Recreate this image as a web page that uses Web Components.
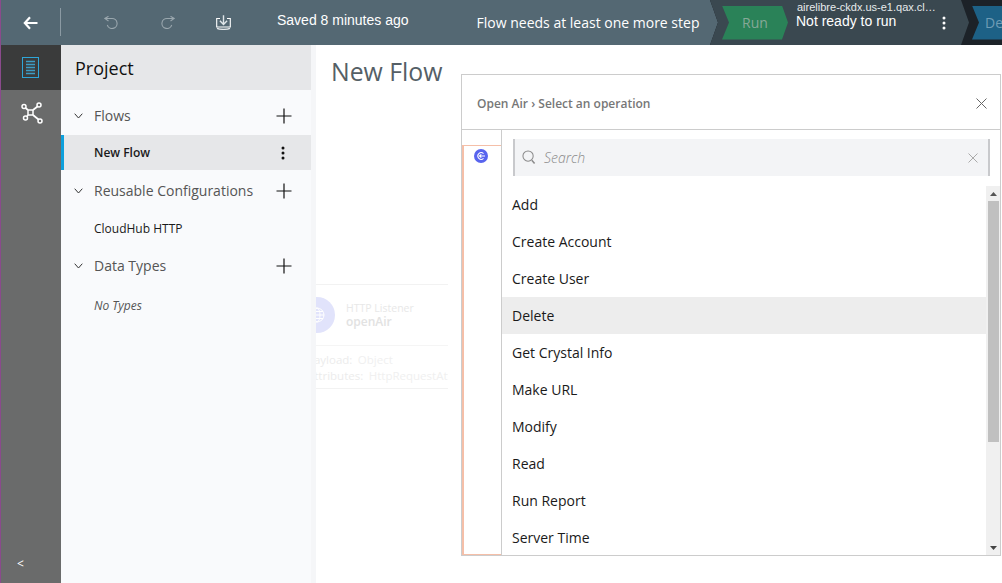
<!DOCTYPE html>
<html lang="en">
<head>
<meta charset="utf-8">
<title>New Flow</title>
<style>
  html, body { margin: 0; height: 100%; overflow: hidden; background: #fff; }
  body { font-family: "Open Sans", sans-serif; }
</style>
</head>
<body>
<app-shell>
  <top-bar slot="top"></top-bar>
  <side-rail slot="rail"></side-rail>
  <project-panel slot="panel">
    <panel-section title="Flows">
      <panel-item selected menu>New Flow</panel-item>
    </panel-section>
    <panel-section title="Reusable Configurations">
      <panel-item>CloudHub HTTP</panel-item>
    </panel-section>
    <panel-section title="Data Types">
      <panel-item empty>No Types</panel-item>
    </panel-section>
  </project-panel>
  <flow-canvas slot="main">
    <operation-modal slot="overlay" crumb="Open Air › Select an operation">
      <op-item>Add</op-item>
      <op-item>Create Account</op-item>
      <op-item>Create User</op-item>
      <op-item active>Delete</op-item>
      <op-item>Get Crystal Info</op-item>
      <op-item>Make URL</op-item>
      <op-item>Modify</op-item>
      <op-item>Read</op-item>
      <op-item>Run Report</op-item>
      <op-item>Server Time</op-item>
    </operation-modal>
  </flow-canvas>
</app-shell>

<script>
// app frame: purple edge, top bar, then rail + panel + canvas
class AppShell extends HTMLElement {
    constructor() {
        super();
        this.attachShadow({ mode: 'open' });
        this.shadowRoot.innerHTML = `
        <style>
          :host { display: flex; flex-direction: column; height: 583px; width: 1002px; border-left: 1px solid #8a4a8c; box-sizing: border-box; }
          .body { flex: 1; display: flex; min-height: 0; }
        </style>
        <slot name="top"></slot>
        <div class="body">
          <slot name="rail"></slot>
          <slot name="panel"></slot>
          <slot name="main"></slot>
        </div>`;
    }
}

class TopBar extends HTMLElement {
    constructor() {
        super();
        this.attachShadow({ mode: 'open' });
        this.shadowRoot.innerHTML = `
        <style>
          :host { display: flex; height: 45px; background: #1c2228; color: #fff; flex: none; align-items: stretch; position: relative; overflow: hidden; font-family: "Liberation Sans", sans-serif; font-size: 14px; }
          .main { width: 717px; flex: none; display: flex; align-items: center; background: #546873; clip-path: polygon(0 0, 709px 0, 717px 50%, 709px 100%, 0 100%); }
          .back { width: 59px; flex: none; display: flex; justify-content: center; }
          .sep { width: 1px; height: 28px; background: #8b9aa3; flex: none; margin-top: -1px; }
          .tool { flex: none; display: flex; }
          .undo { margin-left: 43px; }
          .redo { margin-left: 43px; }
          .save { margin-left: 41px; }
          .saved { margin-left: 46px; position: relative; top: -3px; white-space: nowrap; }
          .need { margin-left: 68px; font-family: "Open Sans", sans-serif; white-space: nowrap; }
          .run-seg { width: 259px; flex: none; margin-left: -8px; background: #3a4850; display: flex; align-items: center; clip-path: polygon(0 0, 251px 0, 259px 50%, 251px 100%, 0 100%, 8px 50%); position: relative; }
          .run { margin-left: 12px; width: 66px; height: 34px; background: #2a8258; color: #86a897; font-family: "Open Sans", sans-serif; display: flex; align-items: center; justify-content: center; clip-path: polygon(0 0, 60px 0, 66px 50%, 60px 100%, 0 100%, 7px 50%); flex: none; box-sizing: border-box; }
          .target { margin-left: 8px; display: flex; flex-direction: column; width: 142px; flex: none; margin-top: -16px; }
          .host { font-size: 11px; line-height: 13px; white-space: nowrap; overflow: hidden; color: #e6eaec; padding-left: 1px; }
          .state { line-height: 16px; white-space: nowrap; margin-top: -1px; }
          .more { flex: none; margin-left: 4px; display: flex; }
          .deploy { margin-left: 3px; width: 40px; flex: none; height: 34px; align-self: center; background: #1d6186; color: #6f9cb5; font-family: "Open Sans", sans-serif; display: flex; align-items: center; padding-left: 13px; box-sizing: border-box; clip-path: polygon(0 0, 100% 0, 100% 100%, 0 100%, 7px 50%); white-space: nowrap; overflow: hidden; }
        </style>
        <div class="main">
          <div class="back">
            <svg width="16" height="14" viewBox="0 0 16 14"><path d="M7 1.2 1.800 7 7 12.800M2 7h12.500" fill="none" stroke="#fff" stroke-width="2.2"/></svg>
          </div>
          <div class="sep"></div>
          <div class="tool undo">
            <svg width="14" height="13" viewBox="0 0 14 13" fill="none" stroke="#9aa7ae" stroke-width="1.100"><path d="M4.500.3.800 2.500 4.500 5M1 2.500h7a5 5 0 1 1-4.700 6.500"/></svg>
          </div>
          <div class="tool redo">
            <svg width="14" height="13" viewBox="0 0 14 13" fill="none" stroke="#9aa7ae" stroke-width="1.100"><path d="M9.500.3 13.200 2.500 9.500 5M13 2.500H6a5 5 0 1 0 4.700 6.500"/></svg>
          </div>
          <div class="tool save">
            <svg width="15" height="15" viewBox="0 0 15 15" fill="none" stroke="#fff" stroke-width="1.100"><path d="M4 3.500H.7V12h13.600V3.500H11"/><path d="M7.500.3V9M3.900 5.700 7.500 9.500l3.600-3.800" stroke="#dfe5e8" stroke-width="1.400"/><path d="M1 13.400c3 1.300 10 1.300 13 0" stroke="#e4e8ea" stroke-width="1.300"/></svg>
          </div>
          <div class="saved">Saved 8 minutes ago</div>
          <div class="need">Flow needs at least one more step</div>
        </div>
        <div class="run-seg">
          <div class="run">Run</div>
          <div class="target">
            <div class="host">airelibre-ckdx.us-e1.qax.cl…</div>
            <div class="state">Not ready to run</div>
          </div>
          <div class="more">
            <svg width="4" height="14" viewBox="0 0 4 14" fill="#fff"><circle cx="2" cy="2" r="1.500"/><circle cx="2" cy="7" r="1.500"/><circle cx="2" cy="12" r="1.500"/></svg>
          </div>
        </div>
        <div class="deploy">Deploy</div>`;
    }
}

class SideRail extends HTMLElement {
    constructor() {
        super();
        this.attachShadow({ mode: 'open' });
        this.shadowRoot.innerHTML = `
        <style>
          :host { display: flex; flex-direction: column; width: 60px; flex: none; background: #6a6b6b; color: #fff; font-family: "Open Sans", sans-serif; }
          .tab { height: 45px; display: flex; align-items: center; justify-content: center; flex: none; }
          .tab.on { background: #3a3b3b; }
          .tab.off { padding-left: 1px; box-sizing: border-box; }
          .grow { flex: 1; }
          .collapse { height: 41px; font-size: 12px; padding-left: 16px; line-height: 44px; box-sizing: border-box; }
        </style>
        <div class="tab on">
          <svg width="18" height="21" viewBox="0 0 18 21" fill="none" stroke="#2ea6d8"><rect x=".5" y=".5" width="16" height="20" stroke-width="1"/><path d="M4 4.500h9M4 7.500h9M4 10.500h9M4 13.500h9M4 16.500h9" stroke-width="1.300" stroke="#3d9cc4"/></svg>
        </div>
        <div class="tab off">
          <svg width="22" height="22" viewBox="0 0 22 22" fill="none" stroke="#fff" stroke-width="1.500"><circle cx="3" cy="4.500" r="2"/><circle cx="18" cy="3" r="2"/><circle cx="4.500" cy="16" r="2"/><circle cx="19" cy="19" r="2"/><rect x="7" y="8" width="5" height="5"/><path d="M4.500 6 7 8M16.500 4.500 12 8M6 14.500 7 13M17.500 17.500 12 13" stroke-width="1.700"/></svg>
        </div>
        <div class="grow"></div>
        <div class="collapse">&lt;</div>`;
    }
}

class ProjectPanel extends HTMLElement {
    constructor() {
        super();
        this.attachShadow({ mode: 'open' });
        this.shadowRoot.innerHTML = `
        <style>
          :host { display: flex; flex-direction: column; width: 250px; flex: none; background: #f9fafc; font-family: "Open Sans", sans-serif; }
          .title { height: 45px; flex: none; background: #e6e7e9; color: #111; font-size: 18px; display: flex; align-items: center; padding-left: 14px; margin-bottom: 5px; }
        </style>
        <div class="title">Project</div>
        <slot></slot>`;
    }
}

class PanelSection extends HTMLElement {
    constructor() {
        super();
        this.attachShadow({ mode: 'open' });
        this.shadowRoot.innerHTML = `
        <style>
          :host { display: block; margin-top: 1px; }
          .head { height: 39px; display: flex; align-items: center; color: #555; font-size: 14px; }
          .chev { width: 33px; padding-left: 13px; box-sizing: border-box; flex: none; display: flex; }
          .name { flex: 1; }
          .add { flex: none; margin-right: 19px; display: flex; }
        </style>
        <div class="head">
          <span class="chev"><svg width="9" height="6" viewBox="0 0 9 6" fill="none" stroke="#333" stroke-width="1"><path d="M.7.700 4.500 5 8.300.700"/></svg></span>
          <span class="name"></span>
          <span class="add"><svg width="16" height="16" viewBox="0 0 16 16" stroke="#111" stroke-width="1.200"><path d="M8 .5v15M.5 8h15"/></svg></span>
        </div>
        <slot></slot>`;
        this.shadowRoot.querySelector('.name').textContent = this.getAttribute('title');
    }
}

class PanelItem extends HTMLElement {
    constructor() {
        super();
        this.attachShadow({ mode: 'open' });
        this.shadowRoot.innerHTML = `
        <style>
          :host { display: flex; align-items: center; height: 35px; padding-left: 33px; font-size: 12px; color: #1a1a1a; }
          :host([selected]) { background: #e6e7e9; border-left: 3px solid #0ea0dc; padding-left: 30px; font-weight: 600; }
          :host([empty]) { font-style: italic; color: #555; margin-top: 3px; }
          .label { flex: 1; position: relative; }
          :host(:not([selected]):not([empty])) .label { top: 1px; }
          .menu { display: none; margin-right: 26px; }
          :host([menu]) .menu { display: flex; }
        </style>
        <span class="label"><slot></slot></span>
        <span class="menu"><svg width="4" height="14" viewBox="0 0 4 14" fill="#111"><circle cx="2" cy="2" r="1.500"/><circle cx="2" cy="7" r="1.500"/><circle cx="2" cy="12" r="1.500"/></svg></span>`;
    }
}

// canvas behind the modal, the flow card is washed out
class FlowCanvas extends HTMLElement {
    constructor() {
        super();
        this.attachShadow({ mode: 'open' });
        this.shadowRoot.innerHTML = `
        <style>
          :host { display: block; flex: 1; position: relative; background: #fff; border-left: 5px solid #f5f6f8; font-family: "Open Sans", sans-serif; overflow: hidden; }
          h1 { margin: 9px 0 0 15px; font-weight: 400; font-size: 24.8px; line-height: 34px; color: #555f66; }
          .card { position: absolute; left: 0; top: 239px; width: 132px; height: 105px; overflow: hidden; border-top: 1px solid #f2f2f2; box-sizing: border-box; }
          .top { height: 60px; border-bottom: 1px solid #f5f5f5; position: relative; }
          .circle { position: absolute; left: -17px; top: 12px; width: 36px; height: 36px; border-radius: 50%; background: #e1e3fb; display: flex; align-items: center; justify-content: center; }
          .meta { position: absolute; left: 30px; top: 16px; font-size: 10.5px; line-height: 14px; color: #e8e8e8; white-space: nowrap; }
          .meta b { display: block; font-size: 12px; color: #e2e2e2; font-weight: 600; }
          .rows { height: 43px; border-bottom: 1px solid #f2f2f2; font-size: 11.5px; line-height: 16px; color: #ececec; white-space: nowrap; padding-top: 6px; box-sizing: border-box; }
          .row { margin-left: -9px; }
          .v { margin-left: 5.5px; color: #f0f0f0; }
        </style>
        <h1>New Flow</h1>
        <div class="card">
          <div class="top">
            <div class="circle"><svg width="16" height="16" viewBox="0 0 16 16" fill="none" stroke="#fff"><circle cx="8" cy="8" r="7"/><ellipse cx="8" cy="8" rx="3" ry="7"/><path d="M1 8h14M2 4.500h12M2 11.500h12"/></svg></div>
            <div class="meta">HTTP Listener<b>openAir</b></div>
          </div>
          <div class="rows">
            <div class="row">Payload:<span class="v">Object</span></div>
            <div class="row">Attributes:<span class="v">HttpRequestAttributes</span></div>
          </div>
        </div>
        <slot name="overlay"></slot>`;
    }
}

// modal over the canvas: breadcrumb header, connector column, search + list
class OperationModal extends HTMLElement {
    constructor() {
        super();
        this.attachShadow({ mode: 'open' });
        this.shadowRoot.innerHTML = `
        <style>
          :host { position: absolute; left: 145px; top: 29px; width: 540px; height: 482px; background: #fff; border: 1px solid #ccc; box-sizing: border-box; display: flex; flex-direction: column; font-family: "Open Sans", sans-serif; }
          header { height: 55px; flex: none; display: flex; align-items: center; border-bottom: 1px solid #ccc; padding: 2px 13px 0 15px; box-sizing: border-box; }
          .crumb { flex: 1; font-size: 12px; font-weight: 600; color: #777; }
          .close, .clear { display: flex; }
          .content { flex: 1; display: flex; min-height: 0; }
          .side { width: 40px; flex: none; border-right: 1px solid #ccc; box-sizing: border-box; padding-top: 15px; }
          .conn { height: 100%; border: 1px solid #f5bfa8; border-width: 1px 0 1px 2px; box-sizing: border-box; padding: 3px 0 0 10px; }
          .conn svg { display: block; }
          .right { flex: 1; display: flex; flex-direction: column; min-width: 0; }
          .search { margin: 9px 10px 0 11px; height: 37px; flex: none; background: #f3f4f6; border: solid #c8c9cc; border-width: 0 2px; display: flex; align-items: center; padding: 0 10px 0 7px; box-sizing: border-box; }
          .search svg { flex: none; }
          .ph { flex: 1; margin-left: 8px; font-size: 14px; font-style: italic; font-weight: 300; color: #8a8a8a; }
          .listwrap { flex: 1; display: flex; min-height: 0; margin-top: 10px; }
          .list { flex: 1; overflow: hidden; min-width: 0; }
          .bar { width: 14px; flex: none; background: #f0f0f0; display: flex; flex-direction: column; align-items: center; }
          .arrow { height: 15px; flex: none; display: flex; align-items: center; justify-content: center; }
          .thumb { width: 11px; height: 241px; flex: none; background: #c0c0c0; }
          .track { flex: 1; }
        </style>
        <header>
          <div class="crumb"></div>
          <span class="close"><svg width="11" height="11" viewBox="0 0 11 11" stroke="#666" stroke-width="1"><path d="M.5.5l10 10M10.500.5l-10 10"/></svg></span>
        </header>
        <div class="content">
          <div class="side">
            <div class="conn">
              <svg width="14" height="14" viewBox="0 0 14 14"><circle cx="7" cy="7" r="7" fill="#5864ee"/><path d="M9.500 4.600A3.300 3.300 0 1 0 9.500 9.400M11 7H5.500M7.300 5.400 5.500 7l1.800 1.600" fill="none" stroke="#fff" stroke-width="1.100"/></svg>
            </div>
          </div>
          <div class="right">
            <div class="search">
              <svg width="14" height="15" viewBox="0 0 15 16" fill="none" stroke="#8a8a8a" stroke-width="1.100"><circle cx="6.500" cy="6.500" r="5.500"/><path d="M10.500 11l3 3.500" stroke-width="1.600"/></svg>
              <span class="ph">Search</span>
              <span class="clear"><svg width="10" height="10" viewBox="0 0 10 10" stroke="#aaa" stroke-width="1"><path d="M.5.500l9 9M9.500.500l-9 9"/></svg></span>
            </div>
            <div class="listwrap">
              <div class="list"><slot></slot></div>
              <div class="bar">
                <div class="arrow"><svg width="7" height="4" viewBox="0 0 7 4" fill="#555"><path d="M3.500 0 7 4H0z"/></svg></div>
                <div class="thumb"></div>
                <div class="track"></div>
                <div class="arrow"><svg width="7" height="4" viewBox="0 0 7 4" fill="#444"><path d="M0 0h7L3.500 4z"/></svg></div>
              </div>
            </div>
          </div>
        </div>`;
        this.shadowRoot.querySelector('.crumb').textContent = this.getAttribute('crumb');
    }
}

class OpItem extends HTMLElement {
    constructor() {
        super();
        this.attachShadow({ mode: 'open' });
        this.shadowRoot.innerHTML = `
        <style>
          :host { display: flex; align-items: center; height: 37px; padding-left: 10px; font-size: 14px; color: #1a1a1a; }
          :host([active]) { background: #ededed; }
        </style>
        <slot></slot>`;
    }
}

customElements.define('app-shell', AppShell);
customElements.define('top-bar', TopBar);
customElements.define('side-rail', SideRail);
customElements.define('project-panel', ProjectPanel);
customElements.define('panel-section', PanelSection);
customElements.define('panel-item', PanelItem);
customElements.define('flow-canvas', FlowCanvas);
customElements.define('operation-modal', OperationModal);
customElements.define('op-item', OpItem);
</script>
</body>
</html>
